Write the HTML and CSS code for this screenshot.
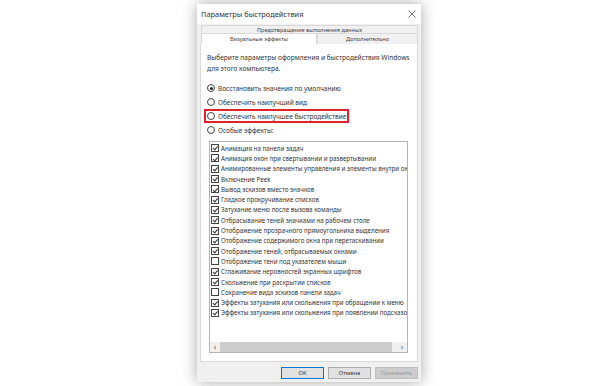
FILE: index.html
```html
<html><head>
<meta charset="UTF-8"><link rel="stylesheet" href="styles.css">
</head><body>
<div class="window">
  <div class="titlebar">
    <span class="title">Параметры быстродействия</span>
    <svg class="close" width="8" height="8" viewBox="0 0 8 8"><path d="M0.5 0.5L7.5 7.5M7.5 0.5L0.5 7.5" stroke="#555" stroke-width="0.8"/></svg>
  </div>
  <div class="tabs">
    <div class="tabrow"><div class="tab wide">Предотвращение выполнения данных</div></div>
    <div class="tabrow">
      <div class="tab active">Визуальные эффекты</div>
      <div class="tab">Дополнительно</div>
    </div>
  </div>
  <div class="panel">
    <p class="intro">Выберите параметры оформления и быстродействия Windows для этого компьютера.</p>
    <div class="radios">
      <div class="radio"><span class="dot on"></span>Восстановить значения по умолчанию</div>
      <div class="radio"><span class="dot"></span>Обеспечить наилучший вид</div>
      <div class="radio marked"><span class="dot"></span>Обеспечить наилучшее быстродействие</div>
      <div class="radio"><span class="dot"></span>Особые эффекты:</div>
    </div>
    <div class="list">
      <div class="items">
        <div class="item"><span class="box on"></span>Анимация на панели задач</div>
        <div class="item"><span class="box on"></span>Анимация окон при свертывании и развертывании</div>
        <div class="item"><span class="box on"></span>Анимированные элементы управления и элементы внутри окна</div>
        <div class="item"><span class="box on"></span>Включение Peek</div>
        <div class="item"><span class="box on"></span>Вывод эскизов вместо значков</div>
        <div class="item"><span class="box on"></span>Гладкое прокручивание списков</div>
        <div class="item"><span class="box on"></span>Затухание меню после вызова команды</div>
        <div class="item"><span class="box on"></span>Отбрасывание теней значками на рабочем столе</div>
        <div class="item"><span class="box on"></span>Отображение прозрачного прямоугольника выделения</div>
        <div class="item"><span class="box on"></span>Отображение содержимого окна при перетаскивании</div>
        <div class="item"><span class="box on"></span>Отображение теней, отбрасываемых окнами</div>
        <div class="item"><span class="box"></span>Отображение тени под указателем мыши</div>
        <div class="item"><span class="box on"></span>Сглаживание неровностей экранных шрифтов</div>
        <div class="item"><span class="box on"></span>Скольжение при раскрытии списков</div>
        <div class="item"><span class="box"></span>Сохранение вида эскизов панели задач</div>
        <div class="item"><span class="box on"></span>Эффекты затухания или скольжения при обращении к меню</div>
        <div class="item"><span class="box on"></span>Эффекты затухания или скольжения при появлении подсказок</div>
      </div>
      <div class="hscroll">
        <span class="arrow">&lsaquo;</span>
        <span class="thumb"></span>
        <span class="track"></span>
        <span class="arrow">&rsaquo;</span>
      </div>
    </div>
  </div>
  <div class="buttons">
    <button class="btn default">ОК</button>
    <button class="btn">Отмена</button>
    <button class="btn disabled">Применить</button>
  </div>
</div>
</body></html>
```

FILE: styles.css
```css
body {margin: 0; background: #fff; font-family: "Noto Sans", "DejaVu Sans", sans-serif; color: #333;}
.window {
	width: 224px; height: 378px; margin: 4px 0 0 197px;
	background: #f0f0f0; box-shadow: 0 0 14px rgba(0,0,0,0.35);
	display: flex; flex-direction: column;
}
.titlebar {height: 20px; background: #fff; display: flex; align-items: center; padding: 0 5px 0 4px;}
.title {flex: 1; font-size: 7.4px; color: #333;}
.close {display: block;}
.tabs {margin: 1px 3px 0 4px;}
.tabrow {display: flex;}
.tab {
	height: 7px; border: 1px solid #d9d9d9; border-bottom: none; background: #f0f0f0;
	font-size: 5.6px; line-height: 8px; text-align: center; flex: 1; color: #444;
}
.tabrow + .tabrow .tab {height: 10px; line-height: 10px;}
.tab.active {background: #fff; flex: 0 0 114px;}
.panel {
	height: 318px; margin: 0 3px 0 3px; background: #fff; border: 1px solid #d9d9d9; border-top: none;
	box-sizing: border-box; padding: 8px 6px 0 6px;
}
.intro {margin: 0; font-size: 6.6px; line-height: 11px; color: #333;}
.radios {margin-top: 7px;}
.radio {
	display: flex; align-items: center; width: max-content; height: 10px;
	font-size: 6.5px; border: 2px solid transparent; padding: 0 1px 0 1px; margin-left: -3px;
	box-sizing: content-box; color: #333;
}
.radio.marked {border-color: #e0232b;}
.dot {
	width: 6px; height: 6px; border: 1px solid #444; border-radius: 50%; margin-right: 3px;
	background: #fff; position: relative;
}
.dot.on::after {content: ""; position: absolute; left: 1.5px; top: 1.5px; width: 3px; height: 3px; border-radius: 50%; background: #222;}
.list {margin: 4px 3px 0 2px; height: 212px; border: 1px solid #b4b4b4; box-sizing: border-box; display: flex; flex-direction: column;}
.items {flex: 1; overflow: hidden; padding-top: 1px;}
.item {display: flex; align-items: center; height: 10.3px; font-size: 6.2px; white-space: nowrap; padding-left: 1px; color: #333;}
.box {flex: none; width: 6px; height: 6px; border: 1px solid #444; margin-right: 2px; background: #fff; position: relative;}
.box.on::after {
	content: ""; position: absolute; left: 1.8px; top: 0.2px; width: 1.6px; height: 3.6px;
	border: solid #333; border-width: 0 0.8px 0.8px 0; transform: rotate(40deg);
}
.hscroll {height: 10px; display: flex; background: #f0f0f0; align-items: center;}
.arrow {width: 10px; text-align: center; font-size: 8px; line-height: 10px; color: #555;}
.thumb {width: 172px; height: 10px; background: #cdcdcd;}
.track {flex: 1;}
.buttons {display: flex; justify-content: flex-end; gap: 4px; margin: 5px 3px 0 0;}
.btn {
	width: 43px; height: 12px; padding: 0; font-family: inherit; font-size: 5.8px;
	background: #e1e1e1; border: 1px solid #adadad; color: #333;
}
.btn.default {border-color: #0078d7;}
.btn.disabled {background: #cccccc; border-color: #bfbfbf; color: #9a9a9a;}
```
